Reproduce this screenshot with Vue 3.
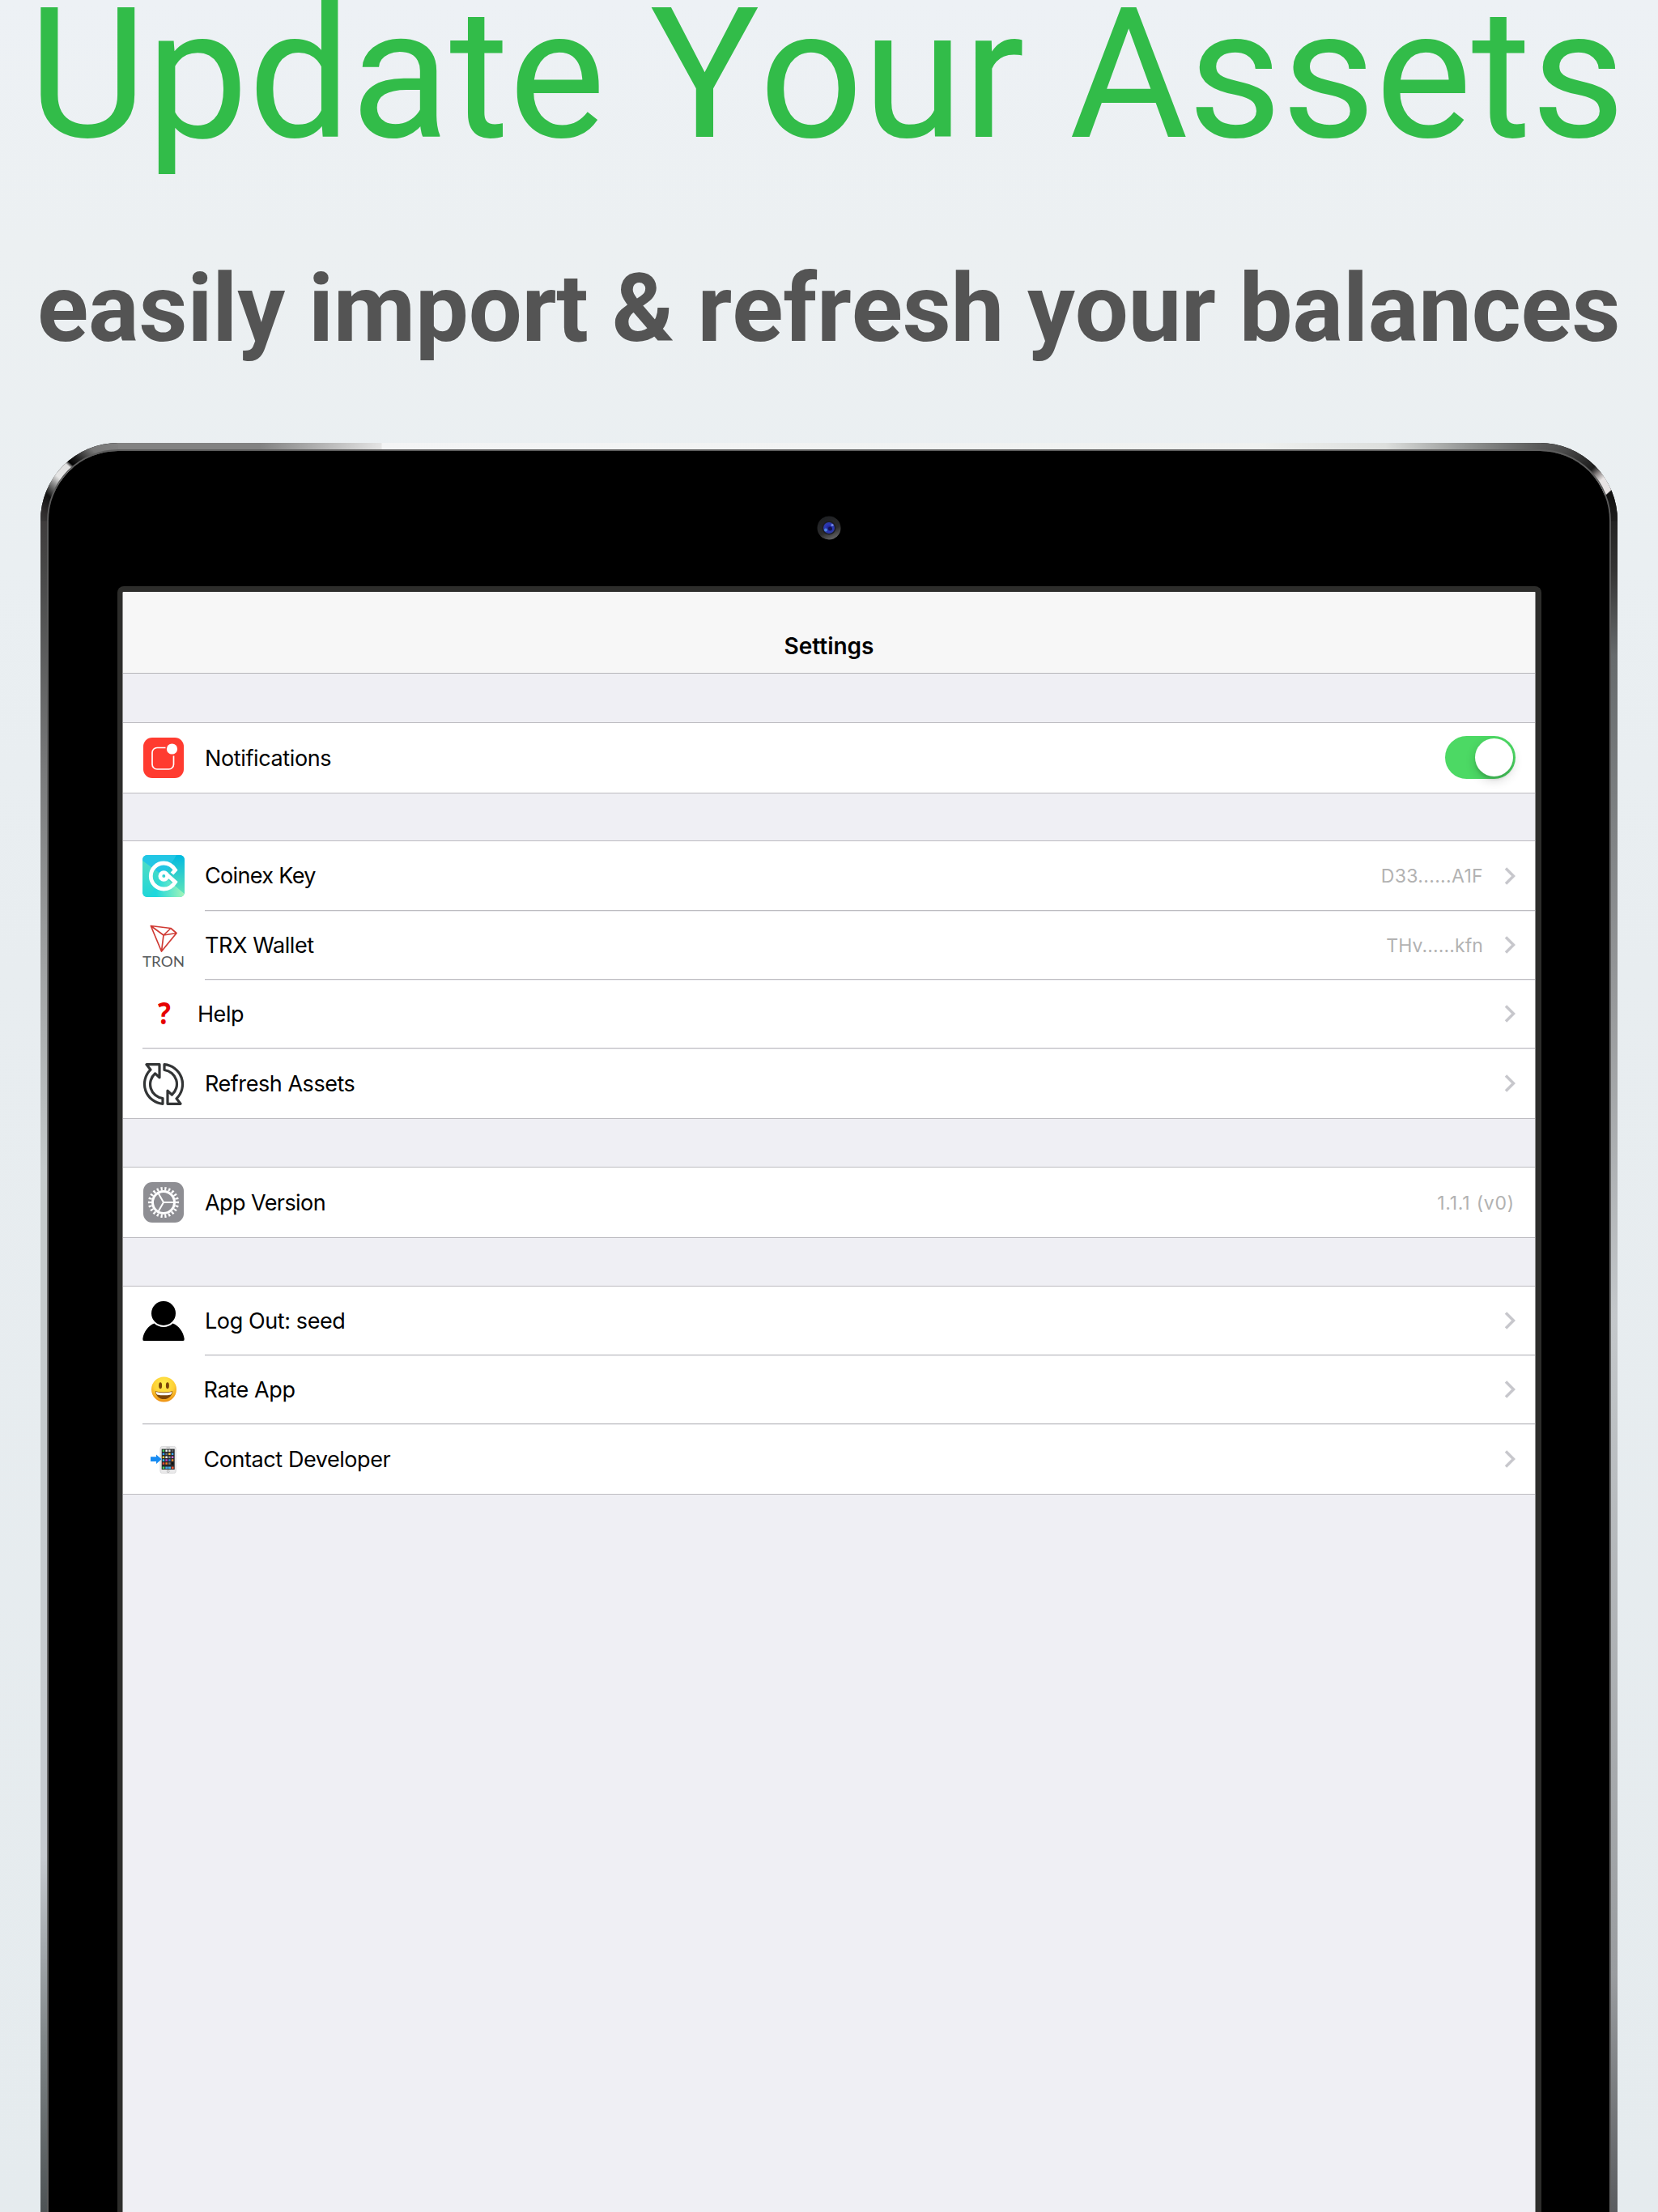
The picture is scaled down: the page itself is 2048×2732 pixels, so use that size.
<script setup>
const groups = [
  {
    id: 'alerts',
    rows: [{ icon: 'bell', label: 'Notifications', track: -0.375, toggle: true }],
  },
  {
    id: 'accounts',
    rows: [
      { icon: 'coinex', label: 'Coinex Key', track: -0.66, value: 'D33......A1F', valueTrack: 0.327, chevron: true },
      { icon: 'tron', label: 'TRX Wallet', track: -0.42, value: 'THv......kfn', valueTrack: 0.104, chevron: true },
      { icon: 'help', label: 'Help', track: -0.449, chevron: true, near: 'closest' },
      { icon: 'refresh', label: 'Refresh Assets', track: -0.448, chevron: true },
    ],
  },
  {
    id: 'about',
    rows: [{ icon: 'gear', label: 'App Version', track: -0.573, value: '1.1.1 (v0)', valueTrack: 0.78 }],
  },
  {
    id: 'user',
    rows: [
      { icon: 'person', label: 'Log Out: seed', track: -0.4, chevron: true },
      { icon: 'smile', label: 'Rate App', track: -0.353, chevron: true, near: 'close' },
      { icon: 'phone', label: 'Contact Developer', track: -0.433, chevron: true, near: 'close' },
    ],
  },
]

const refreshArrow =
  'M5 1.700H21V17.800L15.700 12.800A17.500 17.500 0 0 0 25 43.500V50.300A24.500 24.500 0 0 1 10 8.200Z'

const appColors = [
  '#43c759', '#f2f2f2', '#d9d9d9', '#5f6266',
  '#2b9df4', '#6b6e73', '#f5c33b', '#3fa9f5',
  '#f7d33c', '#ffffff', '#8e8e93', '#c86dd7',
  '#35c3f0', '#c644c9', '#2f7de1', '#f28a2e',
  '#e94b3c', '#ff7a1a', '#77797d', '#111111',
]
</script>

<template>
  <main class="page">
    <h1 class="title">Update Your Assets</h1>
    <h2 class="subtitle">easily import &amp; refresh your balances</h2>

    <section class="device">
      <svg class="frame" width="1948" height="2185" viewBox="50 547 1948 2185" fill="none">
        <defs>
          <linearGradient id="edgeTop" gradientUnits="userSpaceOnUse" x1="145" y1="0" x2="1905" y2="0">
            <stop offset="0" stop-color="#828282" /><stop offset=".1" stop-color="#828282" />
            <stop offset=".185" stop-color="#e4e4e4" /><stop offset=".186" stop-color="#f3f4f5" />
            <stop offset=".8" stop-color="#eff1f0" /><stop offset=".89" stop-color="#dddfdd" />
            <stop offset=".95" stop-color="#8f9190" /><stop offset="1" stop-color="#565656" />
          </linearGradient>
          <linearGradient id="edgeLeft" gradientUnits="userSpaceOnUse" x1="0" y1="643" x2="0" y2="2732">
            <stop offset="0" stop-color="#3f3c3c" /><stop offset=".03" stop-color="#484848" />
            <stop offset=".15" stop-color="#7a7b7c" /><stop offset=".26" stop-color="#9fa1a2" />
            <stop offset=".385" stop-color="#c5cacb" /><stop offset=".79" stop-color="#c6cad0" />
            <stop offset=".9" stop-color="#7f8587" /><stop offset="1" stop-color="#4e5355" />
          </linearGradient>
          <linearGradient id="edgeRight" gradientUnits="userSpaceOnUse" x1="0" y1="643" x2="0" y2="2732">
            <stop offset="0" stop-color="#222" /><stop offset=".03" stop-color="#343434" />
            <stop offset=".08" stop-color="#666a6c" /><stop offset=".28" stop-color="#96989a" />
            <stop offset=".47" stop-color="#c4c8cb" /><stop offset=".86" stop-color="#999c9f" />
            <stop offset="1" stop-color="#5a5c5f" />
          </linearGradient>
          <linearGradient id="cornerLeft" gradientUnits="userSpaceOnUse" x1="50" y1="660" x2="150" y2="547">
            <stop offset="0" stop-color="#444" /><stop offset=".16" stop-color="#2e2b2b" />
            <stop offset=".28" stop-color="#111" /><stop offset=".38" stop-color="#8a8a8a" />
            <stop offset=".45" stop-color="#e6e6e6" /><stop offset=".57" stop-color="#e0e0e0" />
            <stop offset=".6" stop-color="#000" /><stop offset=".66" stop-color="#1c1c1c" />
            <stop offset=".8" stop-color="#777" /><stop offset="1" stop-color="#828282" />
          </linearGradient>
          <linearGradient id="cornerRight" gradientUnits="userSpaceOnUse" x1="1898" y1="547" x2="1998" y2="660">
            <stop offset="0" stop-color="#5e5e5e" /><stop offset=".2" stop-color="#4a4a4a" />
            <stop offset=".46" stop-color="#1c1c1c" /><stop offset=".52" stop-color="#8a8585" />
            <stop offset=".58" stop-color="#e8e4e4" /><stop offset=".69" stop-color="#e8e4e4" />
            <stop offset=".7" stop-color="#101010" /><stop offset="1" stop-color="#222" />
          </linearGradient>
        </defs>
        <path d="M50 2740V643A96 96 0 0 1 146 547H1902A96 96 0 0 1 1998 643V2740Z" fill="#000" />
        <g stroke-width="10">
          <path d="M55 643V2740" stroke="url(#edgeLeft)" />
          <path d="M1993 643V2740" stroke="url(#edgeRight)" />
          <path d="M145.500 551.500H1902.500" stroke="url(#edgeTop)" stroke-width="9" />
          <path d="M55 643.500A91 91 0 0 1 146 552" stroke="url(#cornerLeft)" />
          <path d="M1902 552A91 91 0 0 1 1993 643.500" stroke="url(#cornerRight)" />
        </g>
        <path d="M59 2740V643A87 87 0 0 1 146 556H1902A87 87 0 0 1 1989 643V2740" stroke="#5d5d5d" stroke-width="1.800" />
      </svg>

      <div class="bezel">
        <svg width="30" height="30" viewBox="0 0 30 30">
          <defs>
            <linearGradient id="lensRim" x1=".3" y1="0" x2=".75" y2="1">
              <stop offset="0" stop-color="#1d1f22" /><stop offset=".6" stop-color="#2c2c2d" />
              <stop offset="1" stop-color="#6b6b6c" />
            </linearGradient>
            <radialGradient id="lens"><stop offset="0" stop-color="#1d1f80" /><stop offset=".6" stop-color="#2a35b5" /><stop offset="1" stop-color="#2c3aa0" /></radialGradient>
          </defs>
          <circle cx="15" cy="15" r="14.500" fill="url(#lensRim)" />
          <circle cx="15" cy="15" r="8.500" fill="#1c1c22" />
          <circle cx="15" cy="15" r="7" fill="url(#lens)" />
          <circle cx="16.500" cy="16" r="2.500" fill="#14144f" />
          <circle cx="19" cy="11.500" r="1.600" fill="#7488e0" />
          <circle cx="11" cy="17.500" r="2" fill="#4c86e0" />
        </svg>
      </div>

      <div class="screen">
        <header class="navbar">Settings</header>

        <div v-for="group in groups" :key="group.id" class="group" :class="group.id">
          <template v-for="(row, i) in group.rows" :key="row.label">
            <div v-if="i > 0" class="divider" :class="{ wide: group.rows[i - 1].near }" />
            <div class="row">
              <span class="slot">
                <svg v-if="row.icon === 'bell'" class="raised" width="50" height="50" viewBox="0 0 50 50">
                  <rect width="50" height="50" rx="11" fill="#ff3b30" />
                  <path d="M27.500 12.500H17A6 6 0 0 0 11 18.500V33A6 6 0 0 0 17 39H31.500A6 6 0 0 0 37.500 33V22.500" fill="none" stroke="#fff" stroke-width="1.700" />
                  <circle cx="35.500" cy="14" r="6.600" fill="#fff" />
                </svg>

                <svg v-else-if="row.icon === 'coinex'" width="52" height="52" viewBox="0 0 52 52">
                  <defs>
                    <clipPath id="coinClip"><rect width="52" height="52" rx="6" /></clipPath>
                    <linearGradient id="coinLeft" x1="0" y1="0" x2="0" y2="1"><stop offset="0" stop-color="#4fdcc4" /><stop offset="1" stop-color="#20d6d8" /></linearGradient>
                    <linearGradient id="coinRight" x1="0" y1="0" x2="0" y2="1"><stop offset="0" stop-color="#00b9e0" /><stop offset="1" stop-color="#5fe3b8" /></linearGradient>
                    <linearGradient id="coinBase" x1="0" y1="0" x2="1" y2="0"><stop offset=".2" stop-color="#1fd8dc" /><stop offset="1" stop-color="#a5f5b8" /></linearGradient>
                  </defs>
                  <g clip-path="url(#coinClip)">
                    <rect width="52" height="52" fill="#25cde0" />
                    <path d="M0 0H42L26 26L0 7Z" fill="#22c6e4" />
                    <path d="M42 0H52V48L26 26Z" fill="url(#coinRight)" />
                    <path d="M0 7L26 26L8 52H0Z" fill="url(#coinLeft)" />
                    <path d="M26 26L52 48V52H8Z" fill="url(#coinBase)" />
                  </g>
                  <g fill="none" stroke="#fff" stroke-width="4.800">
                    <path d="M36.500 23L40.500 18.500C36.500 12.500 31.500 10 26.300 10A15.900 15.900 0 1 0 26.300 42C32 42 37 39 40.500 33.500L30 24" />
                    <circle cx="26.300" cy="26" r="4.400" />
                  </g>
                </svg>

                <svg v-else-if="row.icon === 'tron'" class="spill" width="52" height="52" viewBox="0 0 52 52">
                  <path d="M10.300 1.500L35 4.500L42 10.500L23.500 33Z M10.300 1.500L26 13L23.500 33 M26 13L42 10.500 M26 13L35 4.500" fill="none" stroke="#d03a33" stroke-width="1.700" stroke-linejoin="round" />
                  <text x="0" y="52" textLength="52" lengthAdjust="spacingAndGlyphs" class="tron">TRON</text>
                </svg>

                <span v-else-if="row.icon === 'help'" class="question">?</span>

                <svg v-else-if="row.icon === 'refresh'" width="52" height="52" viewBox="0 0 52 52" fill="none" stroke="#333536" stroke-width="3.200" stroke-linejoin="round">
                  <path :d="refreshArrow" />
                  <path :d="refreshArrow" transform="rotate(180 26 26)" />
                </svg>

                <svg v-else-if="row.icon === 'gear'" class="raised" width="50" height="50" viewBox="0 0 50 50" fill="none" stroke="#fff">
                  <rect width="50" height="50" rx="11" fill="#8e8e93" stroke="none" />
                  <circle cx="25" cy="25" r="17" stroke-width="4.200" pathLength="44" stroke-dasharray=".9 1.100" stroke-dashoffset=".45" />
                  <circle cx="25" cy="25" r="13.500" stroke-width="3" />
                  <path d="M25 25H38.500M25 25L18.250 13.300M25 25L18.250 36.700" stroke-width="2" />
                </svg>

                <svg v-else-if="row.icon === 'person'" class="raised" width="52" height="52" viewBox="0 0 52 52">
                  <circle cx="26" cy="17" r="15" />
                  <path d="M1.800 51Q0 51 .3 48.500C1.500 40 7 32.500 14.500 29.500A17 17 0 0 0 37.500 29.500C45 32.500 50.500 40 51.700 48.500Q52 51 50.200 51Z" />
                </svg>

                <svg v-else-if="row.icon === 'smile'" class="raised" width="32" height="32" viewBox="0 0 32 32">
                  <defs>
                    <radialGradient id="face" cx=".5" cy=".3" r=".7">
                      <stop offset="0" stop-color="#fff04f" /><stop offset=".6" stop-color="#fdcf35" />
                      <stop offset="1" stop-color="#ee8f12" />
                    </radialGradient>
                  </defs>
                  <circle cx="16.500" cy="16" r="15.500" fill="url(#face)" />
                  <ellipse cx="12.100" cy="11.300" rx="2" ry="4" fill="#7a4408" />
                  <ellipse cx="20.900" cy="11.300" rx="2" ry="4" fill="#7a4408" />
                  <path d="M5.800 18.200Q16.500 20.800 27.200 18.200C26.500 24.500 22 28 16.500 28S6.500 24.500 5.800 18.200Z" fill="#7d4508" />
                  <path d="M6.500 19Q16.500 21.500 26.500 19Q25.900 22 25 22.400Q16.500 24.200 8 22.400Q6.900 22 6.500 19Z" fill="#fff" />
                </svg>

                <svg v-else width="32" height="34" viewBox="0 0 32 34">
                  <rect x="11.900" y=".4" width="19.400" height="33.200" rx="2.600" fill="#e9e9ea" stroke="#cfcfd1" stroke-width=".7" />
                  <rect x="13.700" y="3.600" width="16" height="25.400" fill="#26282b" />
                  <rect
                    v-for="(color, n) in appColors"
                    :key="n"
                    :x="14.7 + (n % 4) * 3.7"
                    :y="4.6 + Math.floor(n / 4) * 3.9"
                    width="2.500"
                    height="2.500"
                    rx=".5"
                    :fill="color"
                  />
                  <path d="M14.700 26.800H17.300" stroke="#4cd964" stroke-width="2.600" />
                  <path d="M18.300 26.800H21.500" stroke="#4aa8ee" stroke-width="2.600" />
                  <path d="M22 26.800H25" stroke="#3fb6f0" stroke-width="2.600" />
                  <path d="M25.800 26.800H28.600" stroke="#ee5a3c" stroke-width="2.600" />
                  <circle cx="21.700" cy="31.200" r="1.400" fill="none" stroke="#a9a9ab" stroke-width=".8" />
                  <path d="M19.500 2H24" stroke="#a9a9ab" stroke-width=".8" />
                  <path d="M0 13.300H7V10.500L13.500 16.300L7 22V19H0Z" fill="#168bf2" />
                </svg>
              </span>

              <span class="label" :class="row.near" :style="{ letterSpacing: row.track + 'px' }">{{ row.label }}</span>
              <span v-if="row.value" class="value" :style="{ letterSpacing: row.valueTrack + 'px' }">{{ row.value }}</span>
              <svg v-if="row.chevron" class="chevron" width="14" height="22" viewBox="0 0 14 22" fill="none">
                <path d="M2 1.500L11.500 11L2 20.500" stroke="#c7c7cc" stroke-width="3.500" />
              </svg>
              <span v-if="row.toggle" class="toggle"><span class="knob" /></span>
            </div>
          </template>
        </div>
      </div>
    </section>
  </main>
</template>

<style>
body {
  background: #e8edf0;
}
</style>

<style scoped>
.page {
  display: flex;
  flex-direction: column;
  width: 2048px;
  height: 2732px;
  overflow: hidden;
  background: linear-gradient(#edf1f5 0, #ecf0f2 300px, #eaeff2 700px, #e8edf0 1200px, #e5ebee 2732px);
}

.title,
.subtitle {
  flex: none;
  margin: 0;
  font-family: Roboto, sans-serif;
  font-kerning: none;
  line-height: 1;
  white-space: nowrap;
}

.title {
  margin: -20px 0 0 35px;
  color: #32bc49;
  font-size: 225px;
  font-weight: 400;
  letter-spacing: -0.33px;
}

.subtitle {
  margin: 118px 0 0 46px;
  color: #545454;
  font-size: 117px;
  font-weight: 700;
  letter-spacing: -0.13px;
}

.device {
  position: relative;
  flex: none;
  display: flex;
  flex-direction: column;
  width: 1948px;
  height: 2185px;
  margin: 107px 0 0 50px;
}

.frame {
  position: absolute;
  inset: 0;
}

.bezel {
  position: relative;
  flex: none;
  display: flex;
  justify-content: center;
  height: 87px;
  padding-top: 90px;
}

.screen {
  position: relative;
  flex: 1;
  width: 1746px;
  margin-left: 95px;
  border: solid #2d2d2b;
  border-width: 7px 7px 0 6px;
  border-radius: 8px 8px 0 0;
  background: #efeff4;
  box-shadow: inset 1px 1px #8f8f8f, inset -1px 0 #8f8f8f;
  font-family: Inter, sans-serif;
}

.navbar {
  box-sizing: border-box;
  height: 101px;
  margin: 0 1px;
  padding-top: 53px;
  border-bottom: 1px solid #b6b6ba;
  background: #f7f7f7;
  color: #000;
  font-size: 28px;
  font-weight: 600;
  line-height: 28px;
  text-align: center;
}

.group {
  margin: 59px 1px 0;
  border: solid #bdbcc1;
  border-width: 1px 0;
  background: #fff;
}

.group.alerts {
  margin-top: 60px;
}

.group.accounts {
  margin-top: 58px;
}

.row {
  display: flex;
  align-items: center;
  height: 84px;
  padding: 0 24px;
}

.row:last-child {
  height: 86px;
}

.accounts .row:first-child {
  height: 85px;
}

.divider {
  height: 1px;
  margin-left: 101px;
  background: #bdbcc1;
  box-shadow: 0 1px #ececef;
}

.divider.wide {
  margin-left: 24px;
}

.slot {
  display: flex;
  align-items: center;
  justify-content: center;
  flex: none;
  width: 52px;
  height: 52px;
  padding-top: 1px;
}

.raised {
  margin-top: -2px;
}

.spill {
  overflow: visible;
}

.tron {
  fill: #56595c;
  font-family: Lato, sans-serif;
  font-size: 16.5px;
}

.question {
  margin: -6px 0 0 2px;
  color: #e60000;
  font-family: "Open Sans", sans-serif;
  font-size: 38px;
  font-weight: 700;
  line-height: 52px;
  transform: scaleX(0.88);
}

.label {
  flex: 1;
  margin-left: 25px;
  padding-top: 1px;
  color: #000;
  font-size: 27px;
  line-height: 36px;
  white-space: nowrap;
}

.label.close {
  margin-left: 23.5px;
}

.label.closest {
  margin-left: 16px;
}

.value {
  padding-top: 1px;
  color: #b2b2b2;
  font-size: 23px;
  line-height: 32px;
}

.value:last-child {
  margin-right: 1px;
}

.chevron {
  margin-left: 26px;
}

.toggle {
  display: flex;
  justify-content: flex-end;
  box-sizing: border-box;
  width: 87px;
  height: 53px;
  margin-top: -1px;
  padding: 3px;
  border-radius: 27px;
  background: #4cd964;
}

.knob {
  width: 47px;
  height: 47px;
  border-radius: 50%;
  background: #fff;
  box-shadow: 0 5px 13px rgba(0, 0, 0, 0.16), 0 4px 3px rgba(0, 0, 0, 0.1);
}
</style>
